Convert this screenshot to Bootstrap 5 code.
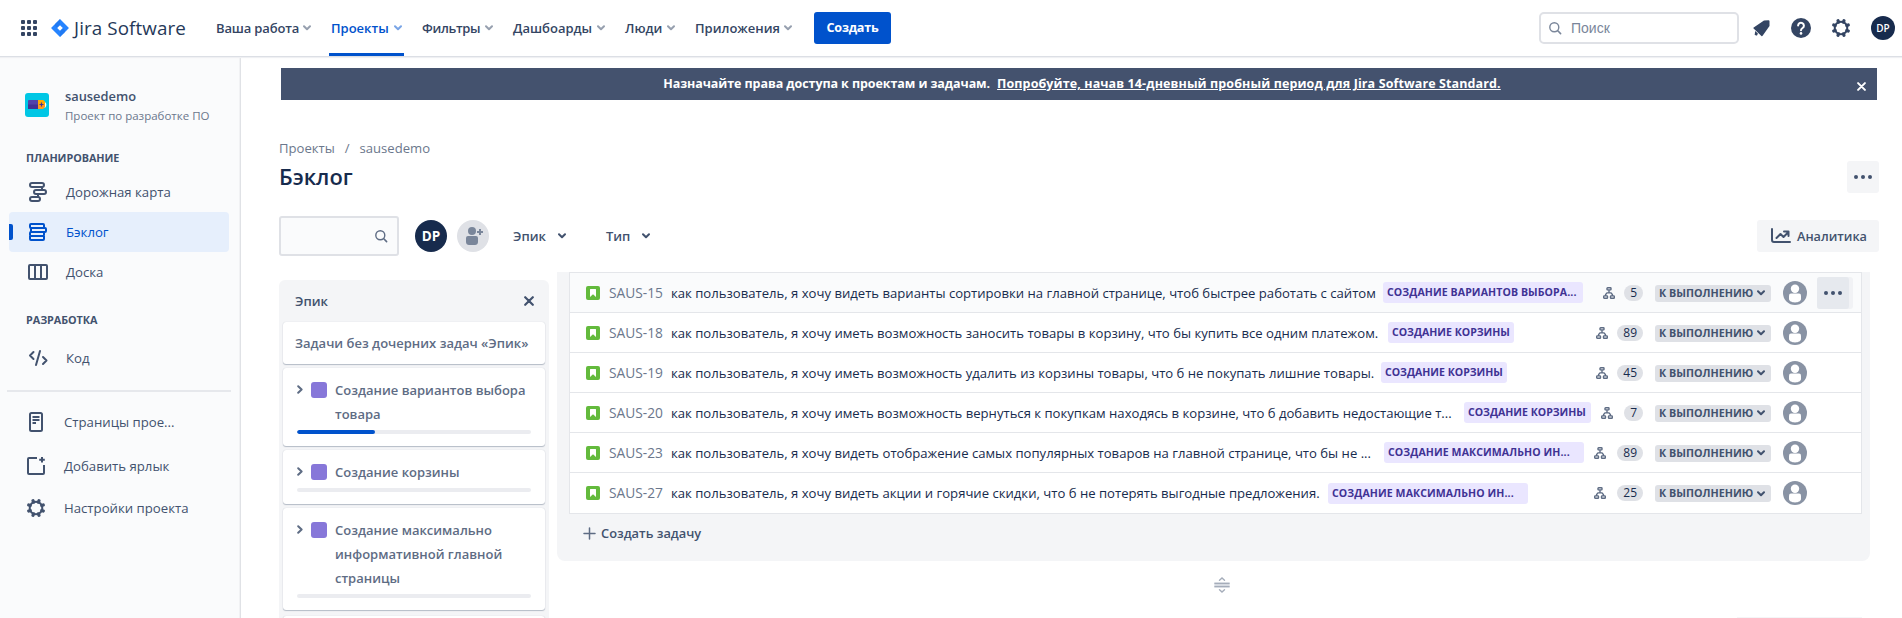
<!DOCTYPE html>
<html lang="ru">
<head>
<meta charset="utf-8">
<meta name="viewport" content="width=device-width, initial-scale=1">
<title>Бэклог — Jira Software</title>
<link href="https://cdn.jsdelivr.net/npm/bootstrap@5.3.0/dist/css/bootstrap.min.css" rel="stylesheet">
<style>
:root{--navy:#172b4d;--slate:#42526e;--mute:#6b778c;--blue:#0052cc;--soft:#f4f5f7;--line:#ebecf0}
body{font-family:"Open Sans","Noto Sans",sans-serif;font-size:13px;line-height:20px;color:var(--navy);height:618px;overflow:hidden}
svg{display:block;flex:none}
.fw-semi{font-weight:600}
.topbar{height:56px;padding-left:21px;color:#344563;position:relative;z-index:2;background:#fff;box-shadow:0 1px 0 #dcdfe5,0 2px 1px #eff0f3}
.apps{margin-right:14px}
.brand{width:163px;font:400 18.8px/24px "Open Sans",sans-serif;color:#253858;letter-spacing:.1px;gap:5px}
.menu-item{height:56px;padding:0 2px;font-weight:600;border-bottom:3px solid transparent;border-top:3px solid transparent;white-space:nowrap}
.menu-item svg{color:#97a0af}
.menu-item.on{color:var(--blue);border-bottom-color:var(--blue)}
.menu-item.on svg{color:#7aa5e6}
.m1{width:99px;margin-right:16px;letter-spacing:-.15px}.m2{width:75px;margin-right:16px}.m3{width:75px;margin-right:16px;letter-spacing:-.35px}
.m4{width:96px;margin-right:16px}.m5{width:54px;margin-right:16px}.m6{width:101px;margin-right:20px}
.btn-create{width:77px;height:32px;background:var(--blue);color:#fff;font-weight:700;font-size:12.6px;letter-spacing:-.2px;border-radius:3px;padding:0;border:0}
.find{width:200px;height:32px;border:2px solid #dfe1e6;border-radius:5px;padding-left:8px;gap:9px;color:#7a869a;font:14px/20px "Liberation Sans",Arial,sans-serif}
.ava{border-radius:50%;background:var(--navy);color:#fff;font-weight:700}
.ava-sm{width:24px;height:24px;font-size:10px;margin-left:20px;font-weight:600}
.ava-md{width:32px;height:32px;font-size:13.5px;margin-left:16px}
.side{width:241px;background:#fafbfc;border-right:1px solid #e0e2e6;box-shadow:inset -1px 0 0 #f1f2f4;color:var(--slate);padding-top:36px}
.proj{height:26px;padding-left:25px;gap:16px}
.proj-name{font-size:12.85px;line-height:18px;padding-top:3px}
.proj-kind{font-size:11.5px;line-height:21px;color:#6b778c}
.side-cap{font-size:10.8px;font-weight:700;line-height:16px;padding-left:26px;letter-spacing:-.05px}
.side-item{height:40px;margin:0 11px 0 9px;border-radius:4px;padding-left:17px;gap:16px;font-size:13.2px;position:relative}
.side-item svg{width:24px}
.side-item.on{background:#e6effc;color:var(--blue)}
.side-item.on::before{content:"";position:absolute;left:0;top:12px;width:4px;height:16px;background:var(--blue);border-radius:0 2px 2px 0}
.side-item.low{padding-left:15px}
.side-rule{height:2px;background:#e6e8ec;margin:12px 9px 10px 7px}
.notice{margin:12px 25px 0 2px;height:32px;background:#44526e;color:#fff;font-weight:700;font-size:12.5px;position:relative;padding-left:6px}
.notice a{color:#fff;letter-spacing:.11px;margin-left:7px}
.notice span{letter-spacing:-.08px}
.notice svg{position:absolute;right:11px;top:14px}
.page{padding-left:38px;min-width:0}
.crumbs{color:var(--mute);font-size:13.1px;gap:10px;margin-top:38px}
.headline{margin:2px 23px 0 0;height:32px;padding-top:2px}
.title{font-size:21.9px;font-weight:600;line-height:28px;margin:0}
.btn-soft{background:var(--soft);border-radius:3px;color:var(--slate);font-weight:600}
.tools{height:40px;margin:24px 23px 0 0}
.quick{width:120px;height:40px;border:2px solid #dfe1e6;border-radius:3px;background:#fafbfc;padding-right:9px}
.drop{color:var(--slate);font-weight:600;gap:12px}
.epics{width:270px;height:338px;background:var(--soft);border-radius:6px 6px 0 0;padding:0 4px;color:#5e6c84;font-weight:600;overflow:hidden}
.epics-head{height:42px;padding:0 11px 0 12px;color:var(--slate)}
.epic{background:#fff;border-radius:3px;box-shadow:0 1px 1px rgba(9,30,66,.25),0 0 1px rgba(9,30,66,.2);margin-bottom:4px;padding:10px 14px 12px;line-height:24px}
.epic-name{gap:8px}
.epic-name svg{margin-top:7px}
.swatch{width:16px;height:16px;border-radius:3px;background:#8777d9;margin-top:4px;flex:none}
.epic .progress{--bs-progress-height:4px;--bs-progress-bg:#ebecf0;--bs-progress-bar-bg:#0052cc;--bs-progress-border-radius:2px;margin-top:4px}
.progress-bar{border-radius:2px}
.board{width:1313px;height:289px;background:var(--soft);border-radius:0 0 8px 8px;padding:0 8px 0 12px;margin:-8px 0 0 8px}
.issues{border:1px solid #e4e6ea;background:#fff}
.issue{height:40px;border-bottom:1px solid #e4e6ea;padding-left:16px;white-space:nowrap}
.issue:last-child{border:0}
.issue.hover{background:#fafbfc}
.key{width:62px;margin-left:9px;color:var(--mute);font-size:13.75px}
.sum{font-size:13.12px;overflow:hidden}
.tag{height:21px;line-height:20px;border-radius:3px;background:#eae6ff;color:#403294;font-weight:700;font-size:10.55px;padding:0 4px}
.s1{width:712px}.s2{width:717px}.s3{width:710px}.s4{width:785px;margin-right:8px}.s5{width:705px;margin-right:8px}.s6{width:657px}
.t-full{width:126px}.t-cut{width:200px;letter-spacing:.1px}.t-row20{width:127px}
.tree{color:#5e6c84}
.pill{height:16px;line-height:16px;min-width:18px;padding:0 6px;border-radius:8px;background:#dfe1e6;font-size:12px;text-align:center;margin:0 12px 0 9px}
.pill.wide{margin-left:11px}
.state{width:116px;height:17px;line-height:17px;border-radius:3px;background:#dfe1e6;color:var(--slate);font-weight:700;font-size:10.75px;padding:0 6px 0 4px;margin:1px 12px 0 0}
.row-act{width:54px;padding-left:10px}
.btn-more{width:36px;height:32px;border-radius:3px;background:#f1f2f5}
.btn-more i{width:32px;height:32px;border-radius:3px;background:#e6e9ee}
.add{height:38px;padding-left:14px;gap:5px;color:var(--slate);font-weight:600;font-size:12.85px}
.grip{padding:16px 0 0 665px;color:#a5adba;height:56px}
.next-btn{width:125px;height:1px;background:var(--soft);margin-left:1188px}
</style>
</head>
<body>
<svg class="d-none">
<symbol id="chev" viewBox="0 0 8 6"><path d="M1 1.3 4 4.3 7 1.3" fill="none" stroke="currentColor" stroke-width="2" stroke-linecap="round" stroke-linejoin="round"/></symbol>
<symbol id="lens" viewBox="0 0 13 13"><circle cx="5.3" cy="5.3" r="4.5" fill="none" stroke="currentColor" stroke-width="1.4"/><path d="M8.8 8.8 11.6 11.6" stroke="currentColor" stroke-width="1.6" stroke-linecap="round"/></symbol>
<symbol id="gear" viewBox="0 0 20 20"><circle cx="10" cy="10" r="6.3" fill="none" stroke="currentColor" stroke-width="2"/><path d="M17.3 13 15.8 12.4M13 17.3 12.4 15.8M7 17.3 7.6 15.8M2.7 13 4.2 12.4M2.7 7 4.2 7.6M7 2.7 7.6 4.2M13 2.7 12.4 4.2M17.3 7 15.8 7.6" stroke="currentColor" stroke-width="3.2" stroke-linecap="round"/></symbol>
<symbol id="cross" viewBox="0 0 10 10"><path d="M1.2 1.2 8.8 8.8M8.8 1.2 1.2 8.8" stroke="currentColor" stroke-width="2.2" stroke-linecap="round"/></symbol>
<symbol id="dots" viewBox="0 0 18 4"><circle cx="2" cy="2" r="2" fill="currentColor"/><circle cx="9" cy="2" r="2" fill="currentColor"/><circle cx="16" cy="2" r="2" fill="currentColor"/></symbol>
<symbol id="story" viewBox="0 0 14 14"><rect width="14" height="14" rx="2" fill="#63ba3c"/><path d="M4 3.5a.5.5 0 0 1 .5-.5h5a.5.5 0 0 1 .5.5V11L7 8.3 4 11z" fill="#fff"/></symbol>
<symbol id="tree" viewBox="0 0 12 12"><g fill="none" stroke="currentColor" stroke-width="1.4"><rect x="4" y=".7" width="4" height="2.2" rx=".6"/><rect x=".7" y="8.9" width="3.8" height="2.4" rx=".6"/><rect x="7.5" y="8.9" width="3.8" height="2.4" rx=".6"/><path d="M6 2.9v3M2.6 8.9V7.6L4 5.9h4l1.4 1.7v1.3"/></g></symbol>
<symbol id="user" viewBox="0 0 24 24"><circle cx="12" cy="12" r="12" fill="#8993a4"/><circle cx="12" cy="7.7" r="4.2" fill="#fff"/><path d="M6 14.500a2 2 0 0 1 2-2h8a2 2 0 0 1 2 2V18c0 2-2.600 3.400-6 3.400S6 20 6 18z" fill="#fff"/></symbol>
<symbol id="right" viewBox="0 0 6 9"><path d="M1.2 1.2 4.6 4.5 1.2 7.8" fill="none" stroke="currentColor" stroke-width="2" stroke-linecap="round" stroke-linejoin="round"/></symbol>
</svg>

<header class="topbar d-flex align-items-center">
  <svg class="apps" width="16" height="16" viewBox="0 0 16 16" fill="#344563"><g id="r"><rect width="4" height="4" rx="1"/><rect x="6" width="4" height="4" rx="1"/><rect x="12" width="4" height="4" rx="1"/></g><use href="#r" y="6"/><use href="#r" y="12"/></svg>
  <div class="brand d-flex align-items-center">
    <svg width="18" height="18" viewBox="0 0 18 18"><path d="M9 0l8.500 8.500a.7.7 0 0 1 0 1L9 18 .5 9.500a.7.7 0 0 1 0-1z" fill="#2684ff"/><path d="M9 0v6.200L6.200 9 3.800 6.600A4 4 0 0 1 6.200 2.800z" fill="#1a6be0" opacity=".4"/><path d="M9 18v-6.200L11.800 9l2.400 2.400a4 4 0 0 1-2.400 3.800z" fill="#1a6be0" opacity=".4"/><path d="M9 6.200 11.800 9 9 11.800 6.200 9z" fill="#fff"/></svg>
    <span>Jira Software</span>
  </div>
  <nav class="d-flex align-items-center">
    <div class="menu-item m1 d-flex align-items-center justify-content-between">Ваша работа<svg width="8" height="6"><use href="#chev"/></svg></div>
    <div class="menu-item m2 on d-flex align-items-center justify-content-between">Проекты<svg width="8" height="6"><use href="#chev"/></svg></div>
    <div class="menu-item m3 d-flex align-items-center justify-content-between">Фильтры<svg width="8" height="6"><use href="#chev"/></svg></div>
    <div class="menu-item m4 d-flex align-items-center justify-content-between">Дашбоарды<svg width="8" height="6"><use href="#chev"/></svg></div>
    <div class="menu-item m5 d-flex align-items-center justify-content-between">Люди<svg width="8" height="6"><use href="#chev"/></svg></div>
    <div class="menu-item m6 d-flex align-items-center justify-content-between">Приложения<svg width="8" height="6"><use href="#chev"/></svg></div>
    <button class="btn btn-create">Создать</button>
  </nav>
  <div class="d-flex align-items-center ms-auto" style="padding-right:7px">
    <div class="find d-flex align-items-center"><svg width="13" height="13"><use href="#lens"/></svg>Поиск</div>
    <svg width="17" height="17" viewBox="0 0 17 17" fill="#344563" style="margin-left:14px"><path d="M11 .5 15.500.3a1 1 0 0 1 1 1V6L9.600 15.800a.8.8 0 0 1-1.200.1L.6 8.600a.8.8 0 0 1 .1-1.200z"/><path d="M2.200 11 4.900 13.500 4 15.400H2.800L1.800 14.200z"/></svg>
    <svg width="20" height="20" viewBox="0 0 20 20" style="margin-left:21px"><circle cx="10" cy="10" r="10" fill="#344563"/><path d="M7.100 7.600a2.900 2.900 0 1 1 4.500 2.400c-1 .7-1.600 1.100-1.600 2.300" fill="none" stroke="#fff" stroke-width="2" stroke-linecap="round"/><circle cx="10" cy="15.400" r="1.300" fill="#fff"/></svg>
    <svg width="20" height="20" style="margin-left:20px"><use href="#gear"/></svg>
    <div class="ava ava-sm d-flex align-items-center justify-content-center">DP</div>
  </div>
</header>

<div class="d-flex" style="height:562px">
  <aside class="side flex-shrink-0">
    <div class="proj d-flex align-items-center">
      <svg width="24" height="24" viewBox="0 0 24 24"><rect width="24" height="24" rx="3" fill="#00c7e5"/><path d="M19.500 9.500q2.500 2 0 5" fill="none" stroke="#fff" stroke-width="1.300"/><rect x="3" y="7" width="11" height="9" rx="1" fill="#5243aa"/><rect x="3" y="11.500" width="10" height="4.500" fill="#403294"/><path d="M13 7h5l2 2v5l-2 2h-5z" fill="#ff991f"/><path d="M13 7h5l2 2v2.500h-7z" fill="#ffab00"/><path d="M16.500 9.500v4M14.500 11.500h4" stroke="#403294" stroke-width="1.200"/></svg>
      <div><div class="fw-semi proj-name">sausedemo</div><div class="proj-kind">Проект по разработке ПО</div></div>
    </div>
    <div class="side-cap" style="margin:32px 0 6px">ПЛАНИРОВАНИЕ</div>
    <div class="side-item d-flex align-items-center"><svg height="24" viewBox="0 0 24 24" fill="none" stroke="currentColor" stroke-width="2"><rect x="4" y="3" width="14" height="4" rx="2"/><rect x="8" y="10" width="12" height="4" rx="2"/><rect x="4" y="17" width="10" height="4" rx="2"/><path d="M16 7v3M12 14v3"/></svg>Дорожная карта</div>
    <div class="side-item on d-flex align-items-center"><svg height="24" viewBox="0 0 24 24" fill="none" stroke="currentColor" stroke-width="2"><rect x="4" y="4" width="14" height="4" rx="1"/><rect x="5" y="8" width="15" height="4" rx="1"/><rect x="4" y="12" width="14" height="4" rx="1"/><path d="M4 16v3a1 1 0 0 0 1 1h12a1 1 0 0 0 1-1v-3"/></svg>Бэклог</div>
    <div class="side-item d-flex align-items-center"><svg height="24" viewBox="0 0 24 24" fill="none" stroke="currentColor" stroke-width="2"><rect x="3" y="5" width="18" height="14" rx="1"/><path d="M9 5v14M15 5v14"/></svg>Доска</div>
    <div class="side-cap" style="margin:20px 0 10px">РАЗРАБОТКА</div>
    <div class="side-item d-flex align-items-center"><svg height="24" viewBox="0 0 24 24" fill="none" stroke="currentColor" stroke-width="2" stroke-linecap="round" stroke-linejoin="round"><path d="M7.500 6 4 9.500 7.500 13M14 5 10 19M17 11l3.500 3.500L17 18"/></svg>Код</div>
    <div class="side-rule"></div>
    <div class="side-item low d-flex align-items-center"><svg height="24" viewBox="0 0 24 24" fill="none" stroke="currentColor" stroke-width="2"><rect x="6" y="3" width="12" height="18" rx="1.500"/><path d="M8.500 7h7M8.500 10h7M8.500 13h3.500" stroke-width="1.800"/></svg>Страницы прое...</div>
    <div class="side-item low d-flex align-items-center" style="margin-top:4px"><svg height="24" viewBox="0 0 24 24" fill="none" stroke="currentColor" stroke-width="2"><path d="M13 4H5a1 1 0 0 0-1 1v14a1 1 0 0 0 1 1h14a1 1 0 0 0 1-1v-8"/><path d="M18 3v5.500M15.200 5.800h5.600"/></svg>Добавить ярлык</div>
    <div class="side-item low d-flex align-items-center" style="margin-top:2px"><svg style="padding:0 2px" height="20"><use href="#gear" width="20" height="20"/></svg>Настройки проекта</div>
  </aside>

  <main class="page flex-grow-1">
    <div class="notice d-flex align-items-center justify-content-center"><span>Назначайте права доступа к проектам и задачам.</span><a href="#">Попробуйте, начав 14-дневный пробный период для Jira Software Standard.</a><svg width="9" height="9"><use href="#cross"/></svg></div>
    <div class="crumbs d-flex"><span>Проекты</span><span>/</span><span>sausedemo</span></div>
    <div class="headline d-flex align-items-center justify-content-between"><h1 class="title">Бэклог</h1><div class="btn-soft d-flex align-items-center justify-content-center" style="width:32px;height:32px"><svg width="18" height="4"><use href="#dots"/></svg></div></div>
    <div class="tools d-flex align-items-center">
      <div class="quick d-flex align-items-center justify-content-end"><svg width="13" height="13" color="#5e6c84"><use href="#lens"/></svg></div>
      <div class="ava ava-md d-flex align-items-center justify-content-center">DP</div>
      <svg width="32" height="32" viewBox="0 0 32 32" style="margin-left:10px"><circle cx="16" cy="16" r="16" fill="#dfe1e6"/><g fill="#7a869a"><circle cx="15" cy="11" r="4"/><path d="M9 18a2 2 0 0 1 2-2h8a2 2 0 0 1 2 2v4c0 1.800-1.300 3-3 3h-6c-1.700 0-3-1.200-3-3z"/><path d="M22 9h2v2h2v2h-2v2h-2v-2h-2v-2h2z"/></g></svg>
      <div class="drop d-flex align-items-center" style="margin-left:24px">Эпик<svg width="8" height="6"><use href="#chev"/></svg></div>
      <div class="drop d-flex align-items-center" style="margin-left:40px">Тип<svg width="8" height="6"><use href="#chev"/></svg></div>
      <div class="btn-soft d-flex align-items-center ms-auto" style="width:122px;height:32px;padding-left:14px;gap:6px;font-size:12.700px"><svg width="20" height="16" viewBox="0 0 20 16" fill="none" stroke="currentColor" stroke-width="2" stroke-linecap="round" stroke-linejoin="round"><path d="M1 1v11a2 2 0 0 0 2 2h16M5.500 10l4-4 3 3L17 4.500M13 3.500h4.500V8"/></svg>Аналитика</div>
    </div>
    <div class="d-flex" style="margin-top:24px">
      <section class="epics">
        <div class="epics-head d-flex align-items-center justify-content-between">Эпик<svg width="10" height="10"><use href="#cross"/></svg></div>
        <div class="epic" style="height:42px;padding:9px 12px">Задачи без дочерних задач «Эпик»</div>
        <div class="epic"><div class="epic-name d-flex"><svg width="6" height="9"><use href="#right"/></svg><span class="swatch"></span><span>Создание вариантов выбора<br>товара</span></div><div class="progress"><div class="progress-bar" style="width:33.300%"></div></div></div>
        <div class="epic"><div class="epic-name d-flex"><svg width="6" height="9"><use href="#right"/></svg><span class="swatch"></span><span>Создание корзины</span></div><div class="progress"></div></div>
        <div class="epic"><div class="epic-name d-flex"><svg width="6" height="9"><use href="#right"/></svg><span class="swatch"></span><span>Создание максимально<br>информативной главной<br>страницы</span></div><div class="progress"></div></div>
        <div class="epic" style="height:20px;margin-top:6px"></div>
      </section>
      <div>
        <section class="board">
          <div class="issues">
            <div class="issue hover d-flex align-items-center"><svg width="14" height="14"><use href="#story"/></svg><span class="key">SAUS-15</span><span class="sum s1">как пользователь, я хочу видеть варианты сортировки на главной странице, чтоб быстрее работать с сайтом</span><span class="tag t-cut">СОЗДАНИЕ ВАРИАНТОВ ВЫБОРА...</span><svg class="tree ms-auto" width="12" height="12"><use href="#tree"/></svg><span class="pill">5</span><span class="state d-flex align-items-center justify-content-between">К ВЫПОЛНЕНИЮ<svg width="8" height="6"><use href="#chev"/></svg></span><svg width="24" height="24"><use href="#user"/></svg><span class="row-act d-flex align-items-center"><span class="btn-more"><i class="d-flex align-items-center justify-content-center"><svg width="18" height="4" color="#42526e"><use href="#dots"/></svg></i></span></span></div>
            <div class="issue d-flex align-items-center"><svg width="14" height="14"><use href="#story"/></svg><span class="key">SAUS-18</span><span class="sum s2">как пользователь, я хочу иметь возможность заносить товары в корзину, что бы купить все одним платежом.</span><span class="tag t-full">СОЗДАНИЕ КОРЗИНЫ</span><svg class="tree ms-auto" width="12" height="12"><use href="#tree"/></svg><span class="pill">89</span><span class="state d-flex align-items-center justify-content-between">К ВЫПОЛНЕНИЮ<svg width="8" height="6"><use href="#chev"/></svg></span><svg width="24" height="24"><use href="#user"/></svg><span class="row-act"></span></div>
            <div class="issue d-flex align-items-center"><svg width="14" height="14"><use href="#story"/></svg><span class="key">SAUS-19</span><span class="sum s3">как пользователь, я хочу иметь возможность удалить из корзины товары, что б не покупать лишние товары.</span><span class="tag t-full">СОЗДАНИЕ КОРЗИНЫ</span><svg class="tree ms-auto" width="12" height="12"><use href="#tree"/></svg><span class="pill">45</span><span class="state d-flex align-items-center justify-content-between">К ВЫПОЛНЕНИЮ<svg width="8" height="6"><use href="#chev"/></svg></span><svg width="24" height="24"><use href="#user"/></svg><span class="row-act"></span></div>
            <div class="issue d-flex align-items-center"><svg width="14" height="14"><use href="#story"/></svg><span class="key">SAUS-20</span><span class="sum s4">как пользователь, я хочу иметь возможность вернуться к покупкам находясь в корзине, что б добавить недостающие т...</span><span class="tag t-row20">СОЗДАНИЕ КОРЗИНЫ</span><svg class="tree ms-auto" width="12" height="12"><use href="#tree"/></svg><span class="pill wide">7</span><span class="state d-flex align-items-center justify-content-between">К ВЫПОЛНЕНИЮ<svg width="8" height="6"><use href="#chev"/></svg></span><svg width="24" height="24"><use href="#user"/></svg><span class="row-act"></span></div>
            <div class="issue d-flex align-items-center"><svg width="14" height="14"><use href="#story"/></svg><span class="key">SAUS-23</span><span class="sum s5">как пользователь, я хочу видеть отображение самых популярных товаров на главной странице, что бы не ...</span><span class="tag t-cut">СОЗДАНИЕ МАКСИМАЛЬНО ИН...</span><svg class="tree ms-auto" width="12" height="12"><use href="#tree"/></svg><span class="pill wide">89</span><span class="state d-flex align-items-center justify-content-between">К ВЫПОЛНЕНИЮ<svg width="8" height="6"><use href="#chev"/></svg></span><svg width="24" height="24"><use href="#user"/></svg><span class="row-act"></span></div>
            <div class="issue d-flex align-items-center"><svg width="14" height="14"><use href="#story"/></svg><span class="key">SAUS-27</span><span class="sum s6">как пользователь, я хочу видеть акции и горячие скидки, что б не потерять выгодные предложения.</span><span class="tag t-cut">СОЗДАНИЕ МАКСИМАЛЬНО ИН...</span><svg class="tree ms-auto" width="12" height="12"><use href="#tree"/></svg><span class="pill wide">25</span><span class="state d-flex align-items-center justify-content-between">К ВЫПОЛНЕНИЮ<svg width="8" height="6"><use href="#chev"/></svg></span><svg width="24" height="24"><use href="#user"/></svg><span class="row-act"></span></div>
          </div>
          <div class="add d-flex align-items-center"><svg width="13" height="13" viewBox="0 0 13 13" stroke="#5e6c84" stroke-width="1.500" stroke-linecap="round"><path d="M6.500 1v11M1 6.500h11"/></svg>Создать задачу</div>
        </section>
        <div class="grip"><svg width="16" height="16" viewBox="0 0 16 16" fill="none" stroke="currentColor" stroke-width="1.400" stroke-linecap="round"><path d="M0 5h16v6H0z" fill="#e9ebef" stroke="none"/><path d="M1 6.500h14M1 9.500h14"/><path d="M5.500 3.300 8 1l2.500 2.300M5.500 12.700 8 15l2.500-2.300"/></svg></div>
        <div class="next-btn"></div>
      </div>
    </div>
  </main>
</div>
<script src="https://cdn.jsdelivr.net/npm/bootstrap@5.3.0/dist/js/bootstrap.bundle.min.js"></script>
</body>
</html>
